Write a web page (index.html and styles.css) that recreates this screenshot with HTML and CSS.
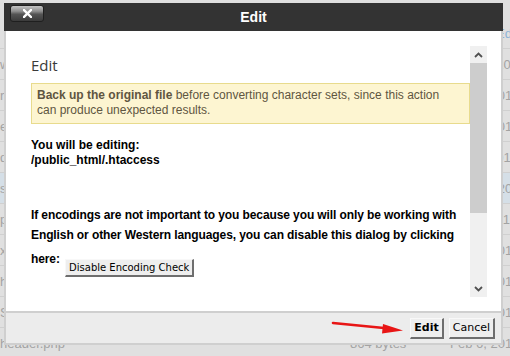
FILE: index.html
```html
<!DOCTYPE html>
<html lang="en">
<head>
    <meta charset="UTF-8">
    <meta name="viewport" content="width=device-width, initial-scale=1.0">
    <title>Edit</title>
    <link rel="stylesheet" href="styles.css">
</head>
<body>
    <!-- file list behind the modal -->
    <div class="files">
        <div class="file-row"><span class="name"></span><span class="size"></span><span class="date"><span class="file-link">Edit</span></span></div>
        <div class="file-row"><span class="name">wwwroot</span><span class="size">4 KB</span><span class="date">Jan 12, 2016</span></div>
        <div class="file-row"><span class="name">robots.txt</span><span class="size">68 bytes</span><span class="date">Mar 3, 2016</span></div>
        <div class="file-row"><span class="name">error_log</span><span class="size">2 KB</span><span class="date">Feb 9, 2016</span></div>
        <div class="file-row"><span class="name">domains</span><span class="size">4 KB</span><span class="date">Jan 2, 2016</span></div>
        <div class="file-row selected"><span class="name">ssl</span><span class="size">4 KB</span><span class="date">Feb 14, 2016</span></div>
        <div class="file-row"><span class="name">public_html</span><span class="size">4 KB</span><span class="date">Apr 8, 2016</span></div>
        <div class="file-row"><span class="name">xmlrpc.php</span><span class="size">3 KB</span><span class="date">Feb 6, 2016</span></div>
        <div class="file-row"><span class="name">htdocs</span><span class="size">4 KB</span><span class="date">Feb 6, 2016</span></div>
        <div class="file-row"><span class="name">Server.php</span><span class="size">1 KB</span><span class="date">Feb 6, 2016</span></div>
        <div class="file-row"><span class="name">header.php</span><span class="size">864 bytes</span><span class="date">Feb 6, 2016</span></div>
    </div>

    <div class="dialog">
        <div class="dialog-title">
            <button class="close" title="Close">
                <svg width="9" height="9" viewBox="0 0 9 9"><path d="M1 1 L8 8 M8 1 L1 8" stroke="#fff" stroke-width="2.4" stroke-linecap="square"/></svg>
            </button>
            <span class="title-text">Edit</span>
        </div>

        <div class="dialog-body">
            <div class="scroll">
                <div class="scroll-content">
                    <h3>Edit</h3>
                    <div class="warning"><b>Back up the original file</b> before converting character sets, since this action can produce unexpected results.</div>
                    <p class="editing">You will be editing:<br>/public_html/.htaccess</p>
                    <p class="encoding">If encodings are not important to you because you will only be working with English or other Western languages, you can disable this dialog by clicking here: <button class="btn small">Disable Encoding Check</button></p>
                </div>
                <div class="scrollbar">
                    <div class="sb-btn">
                        <svg width="9" height="6" viewBox="0 0 9 6"><path d="M1 5 L4.5 1.5 L8 5" fill="none" stroke="#505050" stroke-width="1.8"/></svg>
                    </div>
                    <div class="sb-thumb"></div>
                    <div class="sb-track"></div>
                    <div class="sb-btn">
                        <svg width="9" height="6" viewBox="0 0 9 6"><path d="M1 1 L4.5 4.5 L8 1" fill="none" stroke="#505050" stroke-width="1.8"/></svg>
                    </div>
                </div>
            </div>
        </div>

        <div class="dialog-footer">
            <button class="btn primary">Edit</button>
            <button class="btn">Cancel</button>
        </div>
    </div>

    <svg class="arrow" width="80" height="20" viewBox="0 0 80 20">
        <path d="M2 4 L58 9.5" stroke="#e81515" stroke-width="2.6" stroke-linecap="round"/>
        <path d="M52 5 L72 11.5 L51 14.5 Z" fill="#e81515"/>
    </svg>
</body>
</html>
```

FILE: styles.css
```css
* {
    box-sizing: border-box;
}

body {
    margin: 0;
    height: 356px;
    overflow: hidden;
    background: #e0e0e0;
    font-family: "Liberation Sans", Arial, sans-serif;
    font-size: 12px;
    color: #000;
}

/* background file list */
.files {
    padding-top: 18px;
}

.file-row {
    display: grid;
    grid-template-columns: 350px 100px 1fr;
    height: 31px;
    align-items: center;
    border-bottom: 1px solid #d0d0d0;
    color: #a3a3a3;
    font-size: 13px;
    white-space: nowrap;
}

.file-row.selected {
    background: #d5dfe7;
}

.file-link {
    margin-left: 46px;
    color: #8db3d6;
}

/* modal */
.dialog {
    position: absolute;
    left: 4px;
    top: 3px;
    width: 499px;
    background: #fff;
}

.dialog-title {
    display: grid;
    grid-template-columns: 1fr auto 1fr;
    align-items: center;
    height: 28px;
    background: #333;
}

.close {
    justify-self: start;
    align-self: start;
    display: flex;
    align-items: center;
    justify-content: center;
    width: 34px;
    height: 17px;
    margin: 2px 0 0 6px;
    padding: 0;
    border: 1px solid #1f1f1f;
    border-radius: 3px;
    background: linear-gradient(#c4c4c4, #8e8e8e 35%, #545454 55%, #3b3b3b);
}

.title-text {
    color: #fff;
    font-weight: bold;
    font-size: 14px;
}

.dialog-body {
    padding: 15px 14px 14px 25px;
    border-left: 2px solid #cfcfcf;
    border-right: 2px solid #cfcfcf;
}

.scroll {
    display: flex;
    height: 251px;
}

.scroll-content {
    flex: 1;
    overflow: hidden;
    padding-top: 9px;
}

.scroll-content h3 {
    margin: 0;
    font-family: "Open Sans", sans-serif;
    font-size: 15px;
    font-weight: normal;
    line-height: 20px;
    color: #3a3a3a;
}

.warning {
    margin-top: 8px;
    padding: 4px 9px 5px 5px;
    line-height: 15px;
    background: #fdf5d1;
    border: 1px solid #e8db8d;
    color: #5f5641;
}

.editing {
    margin: 14px 0 0;
    line-height: 15px;
    font-weight: bold;
}

.encoding {
    margin: 37px 0 0;
    line-height: 20px;
    font-weight: bold;
    letter-spacing: -0.1px;
}

.scrollbar {
    display: flex;
    flex-direction: column;
    width: 17px;
    background: #f0f0f0;
}

.sb-btn {
    display: flex;
    align-items: center;
    justify-content: center;
    height: 17px;
}

.sb-thumb {
    height: 150px;
    background: #cdcdcd;
}

.sb-track {
    flex: 1;
}

.dialog-footer {
    display: flex;
    justify-content: flex-end;
    align-items: center;
    gap: 5px;
    height: 34px;
    padding-right: 6px;
    background: #ececec;
    border: 2px solid #cfcfcf;
}

.btn {
    height: 21px;
    padding: 0 3px;
    font-family: "DejaVu Sans", Verdana, sans-serif;
    font-size: 11px;
    line-height: 16px;
    letter-spacing: 0;
    color: #000;
    background: #eeeeee;
    border-style: solid;
    border-width: 1px 2px 2px 1px;
    border-color: #f8f8f8 #6e6e6e #6e6e6e #f8f8f8;
}

.btn.primary {
    font-weight: bold;
}

.btn.small {
    height: 18px;
    font-size: 10px;
    line-height: 13px;
    margin: 14px 0 0 2px;
    vertical-align: -8px;
}

.arrow {
    position: absolute;
    left: 331px;
    top: 319px;
}
```
